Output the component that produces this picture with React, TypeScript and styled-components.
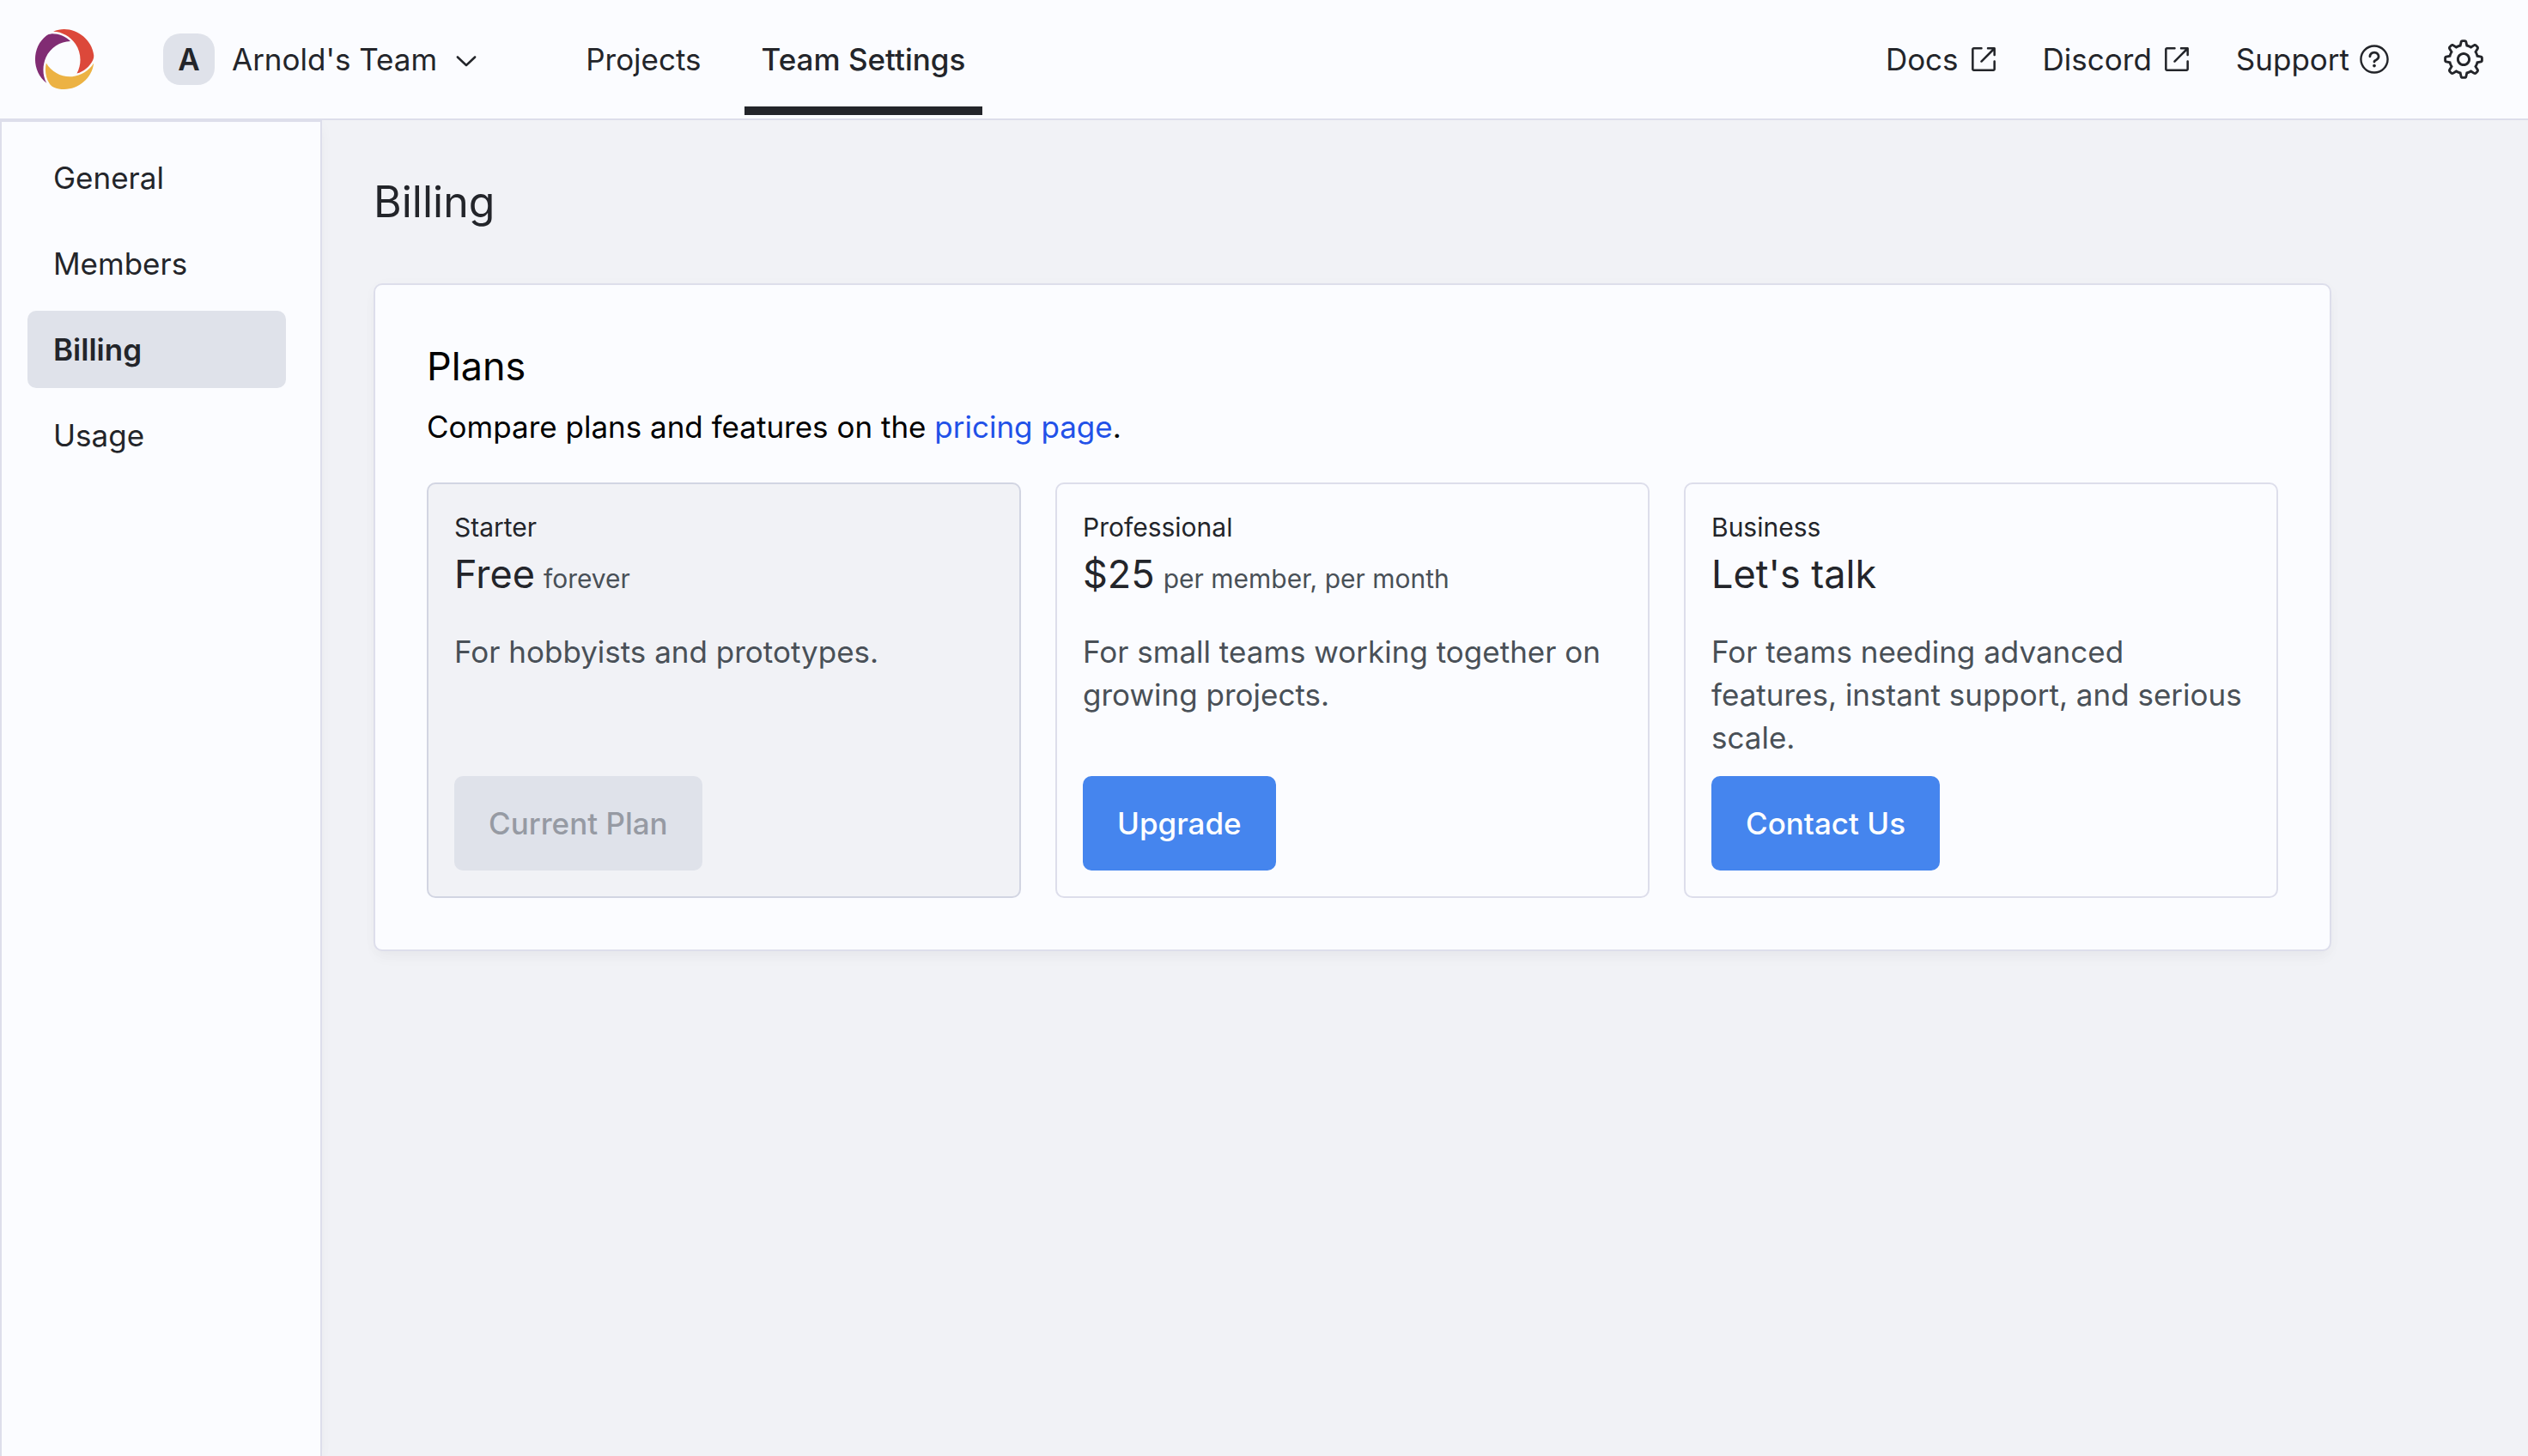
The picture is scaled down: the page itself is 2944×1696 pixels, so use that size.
import React from "react";
import styled, { createGlobalStyle, css } from "styled-components";
import { RxChevronDown, RxExternalLink, RxGear, RxQuestionMarkCircled } from "react-icons/rx";

const color = {
  surface: "#fbfcff",
  page: "#f1f2f6",
  muted: "#dfe2ea",
  border: "#dddeeb",
  borderStrong: "#d2d5e2",
  text: "#23252a",
  secondary: "#495057",
  disabled: "#969aa3",
  link: "#2251e8",
  accent: "#4585ee",
};

const panelShadow = "0 10px 15px -2px rgba(0, 0, 0, 0.03), 0 2px 20px rgba(0, 0, 0, 0.02)";

const GlobalStyle = createGlobalStyle`
  *, *::before, *::after { box-sizing: border-box; }
  body {
    margin: 0;
    background: ${color.page};
    color: ${color.text};
    font-family: Inter, "Liberation Sans", sans-serif;
    font-size: 35px;
    line-height: 50px;
    font-optical-sizing: none;
    -webkit-font-smoothing: antialiased;
  }
  h1, h2, h3, p, ul { margin: 0; padding: 0; font-weight: 400; }
  ul { list-style: none; }
  a { color: inherit; text-decoration: none; }
  button { font: inherit; color: inherit; border: 0; background: none; padding: 0; cursor: pointer; }
  svg { display: block; flex: none; }
`;

const Shell = styled.div`
  display: flex;
  flex-direction: column;
  min-height: 100vh;
`;

const Header = styled.header`
  display: flex;
  align-items: center;
  justify-content: space-between;
  height: 140px;
  padding: 0 50px 0 40px;
  background: ${color.surface};
  border-bottom: 2px solid ${color.border};
`;

const HeaderSide = styled.div`
  display: flex;
  align-items: center;
  align-self: stretch;
`;

const TeamButton = styled.button`
  display: flex;
  align-items: center;
  gap: 15px;
  margin: 0 100px 0 80px;
`;

const TeamBadge = styled.span`
  display: grid;
  place-items: center;
  width: 60px;
  height: 60px;
  margin-right: 5px;
  border-radius: 20px;
  background: ${color.muted};
  font-weight: 600;
`;

const Tabs = styled.nav`
  display: flex;
  align-self: stretch;
  gap: 30px;
`;

const Tab = styled.a<{ $active?: boolean }>`
  display: flex;
  align-items: center;
  margin-bottom: 4px;
  padding: 14px 20px 0;
  border-bottom: 10px solid ${(p) => (p.$active ? color.text : "transparent")};
  font-weight: ${(p) => (p.$active ? 500 : 400)};
`;

const HelpLinks = styled.nav`
  display: flex;
  gap: 50px;
  margin-right: 60px;
`;

const HelpLink = styled.a`
  display: flex;
  align-items: center;
  gap: 10px;
`;

const Body = styled.div`
  display: flex;
  flex: 1;
`;

const Sidebar = styled.nav`
  flex: none;
  width: 375px;
  padding: 20px 40px 20px 30px;
  background: ${color.surface};
  border: 2px solid ${color.border};
  border-bottom: 0;
  box-shadow: ${panelShadow};
  clip-path: inset(0 -30px 0 0);
`;

const SideList = styled.ul`
  display: flex;
  flex-direction: column;
  gap: 10px;
`;

const SideLink = styled.a<{ $active?: boolean }>`
  display: block;
  padding: 20px 30px;
  border-radius: 10px;
  ${(p) =>
    p.$active &&
    css`
      background: ${color.muted};
      font-weight: 600;
    `}
`;

const Main = styled.main`
  flex: 1;
  min-width: 0;
  padding: 60px;
`;

const PageTitle = styled.h1`
  margin-bottom: 60px;
  font-size: 50px;
  line-height: 70px;
`;

const Sheet = styled.section`
  max-width: 2280px;
  padding: 60px;
  background: ${color.surface};
  border: 2px solid ${color.border};
  border-radius: 10px;
  box-shadow: ${panelShadow};
  color: #000;
`;

const SheetTitle = styled.h2`
  margin-bottom: 10px;
  font-size: 45px;
  line-height: 70px;
`;

const TextLink = styled.a`
  color: ${color.link};
`;

const PlanGrid = styled.div`
  display: grid;
  grid-template-columns: repeat(3, minmax(0, 1fr));
  gap: 40px;
  margin-top: 40px;
`;

const PlanCard = styled.article<{ $current?: boolean }>`
  display: flex;
  flex-direction: column;
  align-items: flex-start;
  padding: 30px;
  border: 2px solid ${(p) => (p.$current ? color.borderStrong : color.border)};
  border-radius: 10px;
  background: ${(p) => (p.$current ? color.page : "transparent")};
  color: ${color.text};
`;

const PlanName = styled.h3`
  font-size: 30px;
  line-height: 40px;
`;

const Price = styled.p`
  display: flex;
  align-items: baseline;
  gap: 10px;
  font-size: 45px;
  line-height: 70px;
`;

const PriceUnit = styled.span`
  font-size: 30px;
  line-height: 40px;
  color: ${color.secondary};
`;

const PlanText = styled.p`
  margin: 30px 0 20px;
  color: ${color.secondary};
`;

const PlanButton = styled.button`
  margin-top: auto;
  padding: 30px 40px;
  border-radius: 10px;
  background: ${color.accent};
  color: #fff;
  font-weight: 500;

  &:disabled {
    background: ${color.muted};
    color: ${color.disabled};
    cursor: not-allowed;
  }
`;

const Logo = () => (
  <svg width="70" height="70" viewBox="30.5 31.5 122.6 125" role="img" aria-label="Home">
    <path
      fill="#ecb243"
      d="M108.092 130.021C126.258 128.003 143.385 118.323 152.815 102.167C148.349 142.128 104.653 167.385 68.9858 151.878C65.6992 150.453 62.8702 148.082 60.9288 145.034C52.9134 132.448 50.2786 116.433 54.0644 101.899C64.881 120.567 86.8748 132.01 108.092 130.021Z"
    />
    <path
      fill="#812c73"
      d="M53.4012 90.1735C46.0375 107.191 45.7186 127.114 54.7463 143.51C22.9759 119.608 23.3226 68.4578 54.358 44.7949C57.2286 42.6078 60.64 41.3097 64.2178 41.1121C78.9312 40.336 93.8804 46.0225 104.364 56.6193C83.0637 56.831 62.318 70.4756 53.4012 90.1735Z"
    />
    <path
      fill="#dc483a"
      d="M114.637 61.8552C103.89 46.8701 87.0686 36.6684 68.6387 36.358C104.264 20.1876 148.085 46.4045 152.856 85.1654C153.3 88.7635 152.717 92.4322 151.122 95.6775C144.466 109.195 132.124 119.679 117.702 123.559C128.269 103.96 126.965 80.0151 114.637 61.8552Z"
    />
  </svg>
);

const sideItems = ["General", "Members", "Billing", "Usage"];

const plans = [
  {
    name: "Starter",
    price: "Free",
    unit: "forever",
    text: "For hobbyists and prototypes.",
    action: "Current Plan",
    current: true,
  },
  {
    name: "Professional",
    price: "$25",
    unit: "per member, per month",
    text: "For small teams working together on growing projects.",
    action: "Upgrade",
  },
  {
    name: "Business",
    price: "Let's talk",
    text: "For teams needing advanced features, instant support, and serious scale.",
    action: "Contact Us",
  },
];

export default function App() {
  return (
    <Shell>
      <GlobalStyle />
      <Header>
        <HeaderSide>
          <a href="#home">
            <Logo />
          </a>
          <TeamButton type="button">
            <TeamBadge>A</TeamBadge>
            <span>Arnold's Team</span>
            <RxChevronDown size={38} />
          </TeamButton>
          <Tabs aria-label="Dashboard">
            <Tab href="#projects">Projects</Tab>
            <Tab href="#settings" $active aria-current="page">
              Team Settings
            </Tab>
          </Tabs>
        </HeaderSide>
        <HeaderSide>
          <HelpLinks aria-label="Help">
            <HelpLink href="#docs">
              Docs <RxExternalLink size={38} />
            </HelpLink>
            <HelpLink href="#discord">
              Discord <RxExternalLink size={38} />
            </HelpLink>
            <HelpLink href="#support">
              Support <RxQuestionMarkCircled size={38} />
            </HelpLink>
          </HelpLinks>
          <button type="button" aria-label="Settings">
            <RxGear size={50} />
          </button>
        </HeaderSide>
      </Header>
      <Body>
        <Sidebar aria-label="Team settings">
          <SideList>
            {sideItems.map((item) => (
              <li key={item}>
                <SideLink href={`#${item.toLowerCase()}`} $active={item === "Billing"}>
                  {item}
                </SideLink>
              </li>
            ))}
          </SideList>
        </Sidebar>
        <Main>
          <PageTitle>Billing</PageTitle>
          <Sheet>
            <SheetTitle>Plans</SheetTitle>
            <p>
              Compare plans and features on the <TextLink href="#pricing">pricing page</TextLink>.
            </p>
            <PlanGrid>
              {plans.map((plan) => (
                <PlanCard key={plan.name} $current={plan.current}>
                  <PlanName>{plan.name}</PlanName>
                  <Price>
                    <span>{plan.price}</span>
                    {plan.unit && <PriceUnit>{plan.unit}</PriceUnit>}
                  </Price>
                  <PlanText>{plan.text}</PlanText>
                  <PlanButton type="button" disabled={plan.current}>
                    {plan.action}
                  </PlanButton>
                </PlanCard>
              ))}
            </PlanGrid>
          </Sheet>
        </Main>
      </Body>
    </Shell>
  );
}
